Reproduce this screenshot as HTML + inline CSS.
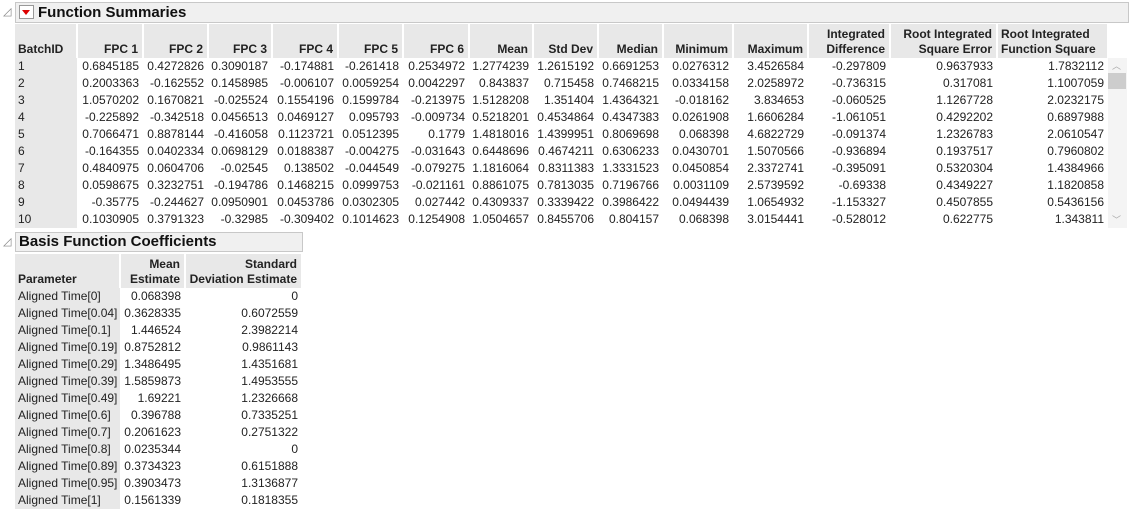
<!DOCTYPE html><html><head><style>
body{margin:0;width:1129px;height:510px;background:#fff;font-family:"Liberation Sans",sans-serif;font-size:12px;color:#222;position:relative;overflow:hidden}
.bar{position:absolute;background:#f0f0f0;border:1px solid #c8c8c8;font-weight:bold;font-size:15px;color:#111}
table{position:absolute;border-collapse:collapse;table-layout:fixed}
td{padding:0 4px 0 3px;height:17px;line-height:17px;text-align:right;white-space:nowrap;overflow:hidden}
th{background:#e8e8e8;font-weight:bold;text-align:right;vertical-align:bottom;padding:0 4px 1px 3px;line-height:15px;border-right:2px solid #fff;white-space:nowrap;overflow:hidden}
td.f{background:#e8e8e8;text-align:left}
th.f{text-align:left}
.tri{position:absolute;font-size:11px;color:#888}
</style></head><body>
<div class="tri" style="left:3px;top:5px">◿</div>
<div class="bar" style="left:15px;top:2px;width:1112px;height:19px;line-height:19px"><span style="display:inline-block;width:13px;height:12px;border:1px solid #999;background:#fff;margin:0 4px 0 3px;vertical-align:-2px;position:relative"><span style="position:absolute;left:2px;top:4px;border-left:4px solid transparent;border-right:4px solid transparent;border-top:5px solid #d00"></span></span>Function Summaries</div>
<table style="left:15px;top:24px;width:1093px">
<colgroup><col style="width:62px"><col style="width:66px"><col style="width:65px"><col style="width:64px"><col style="width:66px"><col style="width:65px"><col style="width:66px"><col style="width:64px"><col style="width:65px"><col style="width:65px"><col style="width:70px"><col style="width:75px"><col style="width:82px"><col style="width:107px"><col style="width:111px"></colgroup>
<tr style="height:34px"><th class="f">BatchID</th><th>FPC 1</th><th>FPC 2</th><th>FPC 3</th><th>FPC 4</th><th>FPC 5</th><th>FPC 6</th><th>Mean</th><th>Std Dev</th><th>Median</th><th>Minimum</th><th>Maximum</th><th>Integrated<br>Difference</th><th>Root Integrated<br>Square Error</th><th style="text-align:left">Root Integrated<br>Function Square</th></tr>
<tr><td class="f">1</td><td>0.6845185</td><td>0.4272826</td><td>0.3090187</td><td>-0.174881</td><td>-0.261418</td><td>0.2534972</td><td>1.2774239</td><td>1.2615192</td><td>0.6691253</td><td>0.0276312</td><td>3.4526584</td><td>-0.297809</td><td>0.9637933</td><td>1.7832112</td></tr>
<tr><td class="f">2</td><td>0.2003363</td><td>-0.162552</td><td>0.1458985</td><td>-0.006107</td><td>0.0059254</td><td>0.0042297</td><td>0.843837</td><td>0.715458</td><td>0.7468215</td><td>0.0334158</td><td>2.0258972</td><td>-0.736315</td><td>0.317081</td><td>1.1007059</td></tr>
<tr><td class="f">3</td><td>1.0570202</td><td>0.1670821</td><td>-0.025524</td><td>0.1554196</td><td>0.1599784</td><td>-0.213975</td><td>1.5128208</td><td>1.351404</td><td>1.4364321</td><td>-0.018162</td><td>3.834653</td><td>-0.060525</td><td>1.1267728</td><td>2.0232175</td></tr>
<tr><td class="f">4</td><td>-0.225892</td><td>-0.342518</td><td>0.0456513</td><td>0.0469127</td><td>0.095793</td><td>-0.009734</td><td>0.5218201</td><td>0.4534864</td><td>0.4347383</td><td>0.0261908</td><td>1.6606284</td><td>-1.061051</td><td>0.4292202</td><td>0.6897988</td></tr>
<tr><td class="f">5</td><td>0.7066471</td><td>0.8878144</td><td>-0.416058</td><td>0.1123721</td><td>0.0512395</td><td>0.1779</td><td>1.4818016</td><td>1.4399951</td><td>0.8069698</td><td>0.068398</td><td>4.6822729</td><td>-0.091374</td><td>1.2326783</td><td>2.0610547</td></tr>
<tr><td class="f">6</td><td>-0.164355</td><td>0.0402334</td><td>0.0698129</td><td>0.0188387</td><td>-0.004275</td><td>-0.031643</td><td>0.6448696</td><td>0.4674211</td><td>0.6306233</td><td>0.0430701</td><td>1.5070566</td><td>-0.936894</td><td>0.1937517</td><td>0.7960802</td></tr>
<tr><td class="f">7</td><td>0.4840975</td><td>0.0604706</td><td>-0.02545</td><td>0.138502</td><td>-0.044549</td><td>-0.079275</td><td>1.1816064</td><td>0.8311383</td><td>1.3331523</td><td>0.0450854</td><td>2.3372741</td><td>-0.395091</td><td>0.5320304</td><td>1.4384966</td></tr>
<tr><td class="f">8</td><td>0.0598675</td><td>0.3232751</td><td>-0.194786</td><td>0.1468215</td><td>0.0999753</td><td>-0.021161</td><td>0.8861075</td><td>0.7813035</td><td>0.7196766</td><td>0.0031109</td><td>2.5739592</td><td>-0.69338</td><td>0.4349227</td><td>1.1820858</td></tr>
<tr><td class="f">9</td><td>-0.35775</td><td>-0.244627</td><td>0.0950901</td><td>0.0453786</td><td>0.0302305</td><td>0.027442</td><td>0.4309337</td><td>0.3339422</td><td>0.3986422</td><td>0.0494439</td><td>1.0654932</td><td>-1.153327</td><td>0.4507855</td><td>0.5436156</td></tr>
<tr><td class="f">10</td><td>0.1030905</td><td>0.3791323</td><td>-0.32985</td><td>-0.309402</td><td>0.1014623</td><td>0.1254908</td><td>1.0504657</td><td>0.8455706</td><td>0.804157</td><td>0.068398</td><td>3.0154441</td><td>-0.528012</td><td>0.622775</td><td>1.343811</td></tr>
</table>
<div style="position:absolute;left:1108px;top:58px;width:19px;height:170px;background:#f4f4f4"></div>
<div style="position:absolute;left:1108px;top:73px;width:18px;height:16px;background:#cdcdcd"></div>
<div style="position:absolute;left:1112px;top:59px;font-size:9px;color:#aaa">︿</div>
<div style="position:absolute;left:1112px;top:213px;font-size:9px;color:#aaa">﹀</div>
<div class="tri" style="left:3px;top:235px">◿</div>
<div class="bar" style="left:15px;top:232px;height:18px;line-height:18px;padding-left:3px;width:283px">Basis Function Coefficients</div>
<table style="left:15px;top:254px;width:287px">
<colgroup><col style="width:105px"><col style="width:65px"><col style="width:117px"></colgroup>
<tr style="height:34px"><th class="f">Parameter</th><th>Mean<br>Estimate</th><th>Standard<br>Deviation Estimate</th></tr>
<tr><td class="f">Aligned Time[0]</td><td>0.068398</td><td>0</td></tr>
<tr><td class="f">Aligned Time[0.04]</td><td>0.3628335</td><td>0.6072559</td></tr>
<tr><td class="f">Aligned Time[0.1]</td><td>1.446524</td><td>2.3982214</td></tr>
<tr><td class="f">Aligned Time[0.19]</td><td>0.8752812</td><td>0.9861143</td></tr>
<tr><td class="f">Aligned Time[0.29]</td><td>1.3486495</td><td>1.4351681</td></tr>
<tr><td class="f">Aligned Time[0.39]</td><td>1.5859873</td><td>1.4953555</td></tr>
<tr><td class="f">Aligned Time[0.49]</td><td>1.69221</td><td>1.2326668</td></tr>
<tr><td class="f">Aligned Time[0.6]</td><td>0.396788</td><td>0.7335251</td></tr>
<tr><td class="f">Aligned Time[0.7]</td><td>0.2061623</td><td>0.2751322</td></tr>
<tr><td class="f">Aligned Time[0.8]</td><td>0.0235344</td><td>0</td></tr>
<tr><td class="f">Aligned Time[0.89]</td><td>0.3734323</td><td>0.6151888</td></tr>
<tr><td class="f">Aligned Time[0.95]</td><td>0.3903473</td><td>1.3136877</td></tr>
<tr><td class="f">Aligned Time[1]</td><td>0.1561339</td><td>0.1818355</td></tr>
</table>
</body></html>
